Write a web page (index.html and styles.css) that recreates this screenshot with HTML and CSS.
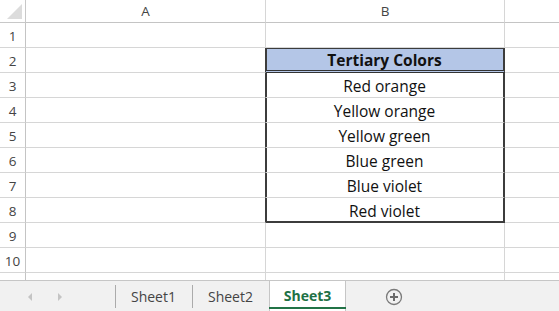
FILE: index.html
```html
<!DOCTYPE html>
<html lang="en">
<head>
  <meta charset="UTF-8">
  <title>Tertiary Colors</title>
  <link rel="stylesheet" href="styles.css">
</head>
<body>
  <div class="sheet">
    <div class="corner"><span class="tri"></span></div>
    <div class="colhead">A</div>
    <div class="colhead">B</div>
    <div class="colhead last"></div>

    <div class="rowhead">1</div><div class="cell"></div><div class="cell"></div><div class="cell last"></div>
    <div class="rowhead">2</div><div class="cell edge"></div><div class="cell title">Tertiary Colors</div><div class="cell last"></div>
    <div class="rowhead">3</div><div class="cell edge"></div><div class="cell item">Red orange</div><div class="cell last"></div>
    <div class="rowhead">4</div><div class="cell edge"></div><div class="cell item">Yellow orange</div><div class="cell last"></div>
    <div class="rowhead">5</div><div class="cell edge"></div><div class="cell item">Yellow green</div><div class="cell last"></div>
    <div class="rowhead">6</div><div class="cell edge"></div><div class="cell item">Blue green</div><div class="cell last"></div>
    <div class="rowhead">7</div><div class="cell edge"></div><div class="cell item">Blue violet</div><div class="cell last"></div>
    <div class="rowhead">8</div><div class="cell edge"></div><div class="cell item end">Red violet</div><div class="cell last"></div>
    <div class="rowhead">9</div><div class="cell"></div><div class="cell"></div><div class="cell last"></div>
    <div class="rowhead">10</div><div class="cell"></div><div class="cell"></div><div class="cell last"></div>
    <div class="rowhead part"></div><div class="cell part"></div><div class="cell part"></div><div class="cell last part"></div>
  </div>

  <div class="tabbar">
    <div class="nav">
      <span class="arrow left"></span>
      <span class="arrow right"></span>
    </div>
    <div class="tab">Sheet1</div>
    <div class="tab">Sheet2</div>
    <div class="tab active">Sheet3</div>
    <div class="add">
      <svg width="18" height="18" viewBox="0 0 18 18">
        <circle cx="9" cy="9" r="7.5" fill="none" stroke="#7a7a7a" stroke-width="1.3"/>
        <path d="M9 5v8M5 9h8" stroke="#6a6a6a" stroke-width="2"/>
      </svg>
    </div>
  </div>
</body>
</html>
```

FILE: styles.css
```css
body {
  margin: 0;
  width: 559px;
  height: 311px;
  overflow: hidden;
  background: #fff;
  font-family: 'Open Sans', 'Noto Sans', sans-serif;
}

.sheet {
  display: grid;
  grid-template-columns: 26px 240px 239px 1fr;
  grid-template-rows: 23px repeat(10, 25px) 7px;
}

.sheet > div {
  box-sizing: border-box;
  border-right: 1px solid #d6d6d6;
  border-bottom: 1px solid #d6d6d6;
}

.corner {
  position: relative;
  border-color: #c8c8c8 !important;
}

.tri {
  position: absolute;
  right: 3px;
  bottom: 3px;
  width: 0;
  height: 0;
  border-left: 15px solid transparent;
  border-bottom: 15px solid #dcdcdc;
}

.colhead {
  display: flex;
  align-items: center;
  justify-content: center;
  font-size: 13.5px;
  color: #444;
  border-bottom-color: #c4c4c4 !important;
}

.rowhead {
  display: flex;
  align-items: center;
  justify-content: center;
  font-size: 13.5px;
  padding-top: 1px;
  color: #444;
  border-right-color: #c4c4c4 !important;
}

.sheet > .last {
  border-right: none;
}

.sheet > .part {
  border-bottom: none;
}

.cell.edge {
  border-right-color: #3c3c3c;
}

.title,
.item {
  display: flex;
  align-items: center;
  justify-content: center;
  font-size: 15.5px;
  padding-top: 2px;
  color: #111;
  box-shadow: inset 1px 0 0 #3c3c3c;
  border-right: 2px solid #3c3c3c !important;
}

.title {
  background: #b4c6e7;
  font-weight: bold;
  padding-top: 1px;
  border-bottom: 3px double #333 !important;
  box-shadow: inset 1px 0 0 #3c3c3c, inset 0 1px 0 #3c3c3c;
}

.item.end {
  border-bottom: 2px solid #3c3c3c !important;
}

.tabbar {
  display: flex;
  align-items: stretch;
  height: 32px;
  background: #f1f1f1;
  border-top: 1px solid #c6c6c6;
  box-sizing: border-box;
}

.nav {
  width: 115px;
  display: flex;
  align-items: center;
  padding-left: 28px;
  gap: 26px;
  box-sizing: border-box;
}

.arrow {
  width: 0;
  height: 0;
  border-top: 4px solid transparent;
  border-bottom: 4px solid transparent;
}

.arrow.left {
  border-right: 4px solid #c4c4c4;
}

.arrow.right {
  border-left: 4px solid #c4c4c4;
}

.tab {
  width: 77px;
  display: flex;
  align-items: center;
  justify-content: center;
  font-size: 14px;
  color: #444;
  box-sizing: border-box;
  position: relative;
}

.tab::before {
  content: '';
  position: absolute;
  left: 0;
  top: 4px;
  bottom: 4px;
  border-left: 1px solid #ababab;
}

.tab.active {
  background: #fff;
  color: #1e7145;
  font-weight: bold;
  border-left: 1px solid #c6c6c6;
  border-right: 1px solid #c6c6c6;
  margin-top: -1px;
  border-top: 1px solid #c6c6c6;
  padding-bottom: 3px;
}

.tab.active::before {
  display: none;
}

.tab.active::after {
  content: '';
  position: absolute;
  left: -1px;
  right: -1px;
  bottom: 3px;
  border-bottom: 2px solid #217346;
}

.add {
  display: flex;
  align-items: center;
  padding-left: 39px;
}
```
